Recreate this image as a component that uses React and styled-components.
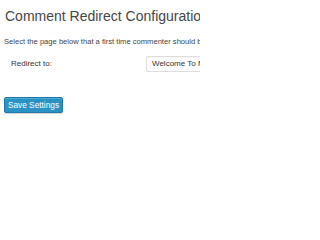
import styled, { createGlobalStyle } from "styled-components";

const Global = createGlobalStyle`
  html, body { margin: 0; padding: 0; background: #fff; }
  body { font-family: "Liberation Sans", Arial, sans-serif; color: #444; overflow: hidden; }
`;

const Wrap = styled.div`
  width: 200px;
  height: 200px;
  overflow: hidden;
  padding: 9px 0 0 4px;
  box-sizing: border-box;
  white-space: nowrap;
`;

const Title = styled.h2`
  margin: 0 0 0 1px;
  font-size: 14px;
  font-weight: 400;
  line-height: 15px;
  color: #464646;
`;

const Intro = styled.p`
  margin: 13px 0 0;
  font-size: 7.6px;
  line-height: 10px;
  color: #444;
`;

const Row = styled.div`
  display: flex;
  align-items: center;
  margin-top: 9px;
`;

const Label = styled.label`
  flex: 0 0 142px;
  padding-left: 7px;
  box-sizing: border-box;
  font-size: 8px;
  color: #333;
  margin-top: -2px;
`;

const Select = styled.div`
  flex: 0 0 auto;
  height: 14px;
  padding: 0 12px 0 5px;
  border: 1px solid #ddd;
  border-radius: 2px;
  background: #fff;
  font-size: 8px;
  line-height: 14px;
  color: #333;
  box-shadow: inset 0 1px 1px rgba(0,0,0,0.04);
`;

const Button = styled.button`
  display: block;
  margin-top: 25px;
  width: 59px;
  height: 16px;
  padding: 0;
  border: 1px solid #1f78a8;
  border-radius: 2px;
  background: #2b92c4;
  color: #fff;
  font-family: "Liberation Sans", Arial, sans-serif;
  font-size: 8.3px;
  line-height: 14px;
  box-shadow: inset 0 1px 0 rgba(120,200,230,0.45), 0 1px 0 rgba(0,0,0,0.15);
`;

export default function App() {
  return (
    <Wrap>
      <Global />
      <Title>Comment Redirect Configuration</Title>
      <Intro>Select the page below that a first time commenter should be redirected to.</Intro>
      <Row>
        <Label>Redirect to:</Label>
        <Select>Welcome To My Site</Select>
      </Row>
      <Button>Save Settings</Button>
    </Wrap>
  );
}
